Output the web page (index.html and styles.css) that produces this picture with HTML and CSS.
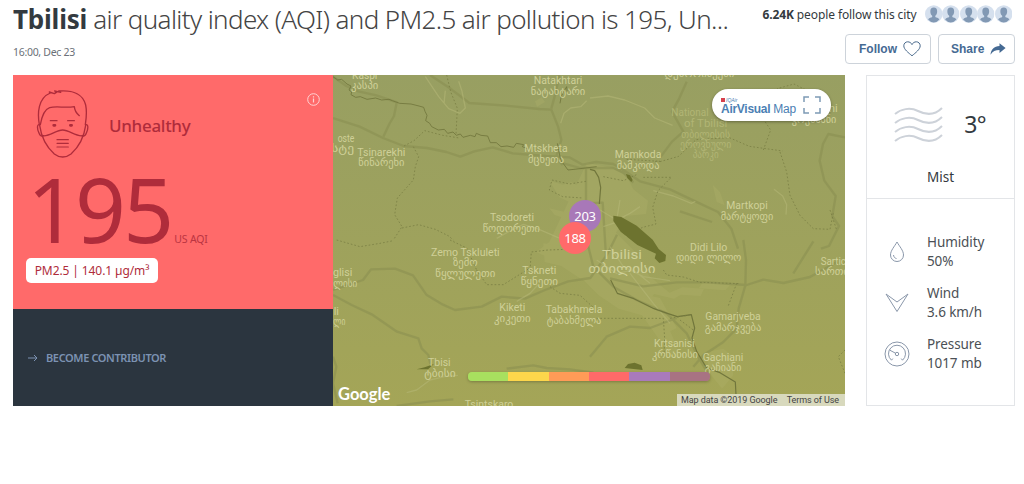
FILE: index.html
```
<!doctype html>
<html lang="en">
<head>
	<meta charset="UTF-8">
	<title>Tbilisi Air Quality Index (AQI)</title>
	<link rel="stylesheet" href="styles.css">
</head>
<body>
	<svg class="defs" width="0" height="0">
		<symbol id="user" viewBox="0 0 18 18">
			<circle cx="9" cy="9" r="9" fill="#d5e0ee"/>
			<path d="M9 2.200c-2.400 0-3.600 1.600-3.500 3.900 0 2 .6 3.800 1.900 4.700v1.400c-1 .8-3.400.8-4.200 2.400A9 9 0 0 0 9 17.800a9 9 0 0 0 5.800-3.200c-.8-1.600-3.200-1.600-4.200-2.400v-1.400c1.300-.9 1.900-2.700 1.900-4.700C12.600 3.800 11.400 2.200 9 2.200z" fill="#8299b4"/>
		</symbol>
	</svg>
	<div class="header">
		<div class="heading">
			<h1><b>Tbilisi</b> <span>air quality index (AQI) and PM2.5 air pollution is 195, Un...</span></h1>
			<p class="time">16:00, Dec 23</p>
		</div>
		<div class="social">
			<div class="followers">
				<p><b>6.24K</b> <span>people follow this city</span></p>
				<div class="avatars">
					<svg><use href="#user"/></svg>
					<svg><use href="#user"/></svg>
					<svg><use href="#user"/></svg>
					<svg><use href="#user"/></svg>
					<svg><use href="#user"/></svg>
				</div>
			</div>
			<div class="buttons">
				<a class="btn follow">Follow
					<svg width="18" height="16" viewBox="0 0 18 16" fill="none" stroke="#4a6a8c"><path d="M9 14.800C5.500 11.800.8 8.400.8 4.800.8 2.500 2.500.8 4.700.8 6.500.8 8.200 1.800 9 3.600 9.800 1.800 11.500.8 13.300.8c2.200 0 3.900 1.700 3.900 4 0 3.600-4.700 7-8.200 10z"/></svg>
				</a>
				<a class="btn share">Share
					<svg width="16" height="12" viewBox="0 0 16 12"><path d="M9.500.3 15.600 5 9.500 10V7C5.300 7 2.700 8.400.5 11.700.9 6.800 4.200 3.200 9.500 3z" fill="#456a93"/></svg>
				</a>
			</div>
		</div>
	</div>

	<div class="main">
		<div class="aqi">
			<div class="aqi-value">
				<div class="status">
					<svg class="face" width="54" height="68" viewBox="0 0 160 204" fill="none" stroke="#af2c3b" stroke-width="4" stroke-linejoin="round" stroke-linecap="round">
						<path d="M9 104C3 70 5 24 42 9l-3-3 15 5 6-4-5-4 18 4-6-4c46-4 74 12 81 42 4 20 2 40-1 59"/>
						<path d="M9 104c-8-1-6 13-2 23 3 9 7 13 14 10M149 104c8-1 6 13 2 23-3 9-7 13-14 10"/>
						<path d="M10 106c5 37 22 66 44 86 15 12 35 12 50 0 22-20 39-49 44-86"/>
						<path d="M12 104c5-28 13-46 28-51 22-6 44 2 74-3 1 13 6 20 15 27"/>
						<path d="M18 137c22 4 40-17 61-17s39 21 61 17"/>
						<path d="M42 92h20M94 92h20" stroke-width="4"/>
						<path d="M52 106h4M102 106h4" stroke-width="8"/>
						<path d="M62 149h34M62 160h34M62 171h34" stroke-width="3.500"/>
					</svg>
					<h2>Unhealthy</h2>
					<svg class="info" width="13" height="13" viewBox="0 0 13 13" fill="none" stroke="#ffd3d3"><circle cx="6.500" cy="6.500" r="5.800"/><path d="M6.500 5.500v4M6.500 3.200v1.200" stroke-width="1.200"/></svg>
				</div>
				<div class="number"><strong>195</strong><span>US AQI</span></div>
				<div class="pollutant">PM2.5 | 140.1 µg/m³</div>
			</div>
			<a class="contributor">
				<svg width="10" height="8" viewBox="0 0 10 8" fill="none" stroke="#7c92b2"><path d="M0 4h9M6 1l3 3-3 3"/></svg>
				<span>BECOME CONTRIBUTOR</span>
			</a>
		</div>

		<div class="map">
			<svg class="tiles" width="512" height="331" viewBox="9 15 1536 993">
				<defs>
					<linearGradient id="ground" x1="0" y1="0" x2="0" y2="1">
						<stop offset="0" stop-color="#989f62"/>
						<stop offset="1" stop-color="#a4a557"/>
					</linearGradient>
				</defs>
				<path d="M9 15h1536v993H9z" fill="url(#ground)"/>
				<!-- built-up areas -->
				<g class="urban">
					<path d="M658 332l40 12 26-8 34 20 6 38-46 2-30-14z"/>
					<path d="M658 415l60 14 6 22-50-16z"/>
					<path d="M770 280l70 12 50 26 20 40 44 34-6 40-60 6-30 50 60 60 40 70 60 50 40-16 64 4-10 22-60-4-20 12-60-14-20 30 50 38 30 70 20 60-30-10-36-54-50-70-70-20-60-40-60-60-74-46-54-24 40-30z"/>
					<path d="M640 520l100 14 50 60 14 40-50-6-60-40-50-12z"/>
					<path d="M1148 344l22 22 14 40-24-10zM900 664l90 20 50 90-20 10-70-60z"/>
					<path d="M1130 846l50-10 24 20 6 60-34 40-40-50zM615 94l20-12 10 14-24 14z"/>
					<path d="M1120 635l80 10-14 16-80-6z"/>
				</g>
				<!-- roads -->
				<g class="roads">
					<path d="M9 144l80 26 70 34 62 24 70 6 58 12 42 14 42-16 55-12 60 18 100 8 70 4 40 22 40-8 52 6 30 18 50 34 90 24 84 40 60 28 40 50 20 60"/>
					<path d="M160 200l18-38 14-24 8-40M9 20l40 28 36 16 54 12 64 22"/>
					<path d="M300 15l60 40 58 44 110 8 100 10 36 2 20 50 10 40-16 54 20 22"/>
					<path d="M664 116l14-52 10-50M700 280l50 14 100 0 30 14 30 30"/>
					<path d="M9 675l56 30 60 28 76 52 64 20 10 30 20 20 6 26"/>
					<path d="M9 660l90-30 24-32 72-2 54 20 40 58 50 30 36 16 80-10 60-30 70 6 60-26 70-26 66-10 50-70 30-60"/>
					<path d="M840 625l100 24 100-12 90 0 120 8 50-16 60 10 80-18 82-46M1390 610l60-96"/>
					<path d="M1240 510l8 60-2 76-20 70-6 60-40 40-60 40-30 34"/>
					<path d="M1545 202l-50-10-16 30-10 50 14 60 34 46-10 60 20 30-30 60-24 8"/>
					<path d="M1070 35l-22 50-22 40 34 60-34 30-36 48"/>
					<path d="M770 510l20 80 60 60 70 40 90 40 60 60 34 70 30 50M780 860l50-60 70-30 60 4 80-30"/>
					<path d="M768 290l0 110 50-2 10 160M1050 424l96 32"/>
					<path d="M530 896l80-10 40 8 70 4 70 10M9 860l10 30-10 50 14 60M200 1008l100-14 70-6"/>
				</g>
				<g class="lanes">
					<path d="M286 20l40 60 30 36 34 14 16-16-10-50-10-30M342 100l4-38M560 694l40-24 26-28M780 84l54-6 50 12 60 24 30 30 54 22M970 362l60 16 54 22 12-6M1332 358l26 20 12 26-2 30M230 968l30-8 40-30 44-10 40-4M692 160l10-30 20-16 30-4 18-18M900 610l70 90 50 60M500 505l40-22 40-20 40 12 70 30M840 530l40 60 60 30 80 12M800 570l60 40 50-10 50 40M810 420l50 30 40-20 30-20M820 470l60-20M870 390l-10 60 30 50"/>
				</g>
				<!-- river -->
				<g class="river">
					<path class="thin" d="M9 20l14 10 12-2 16 14 12 6-6 12 8 6-2 8 14 8 14-2 20 8 26-4 18 6 22-2 10 4 22 8 34 2 24 6 14 4 4 12 6 12-4 16 12 8 6 10 20 10 18-2 10 12 16-4 10 10 12-4 8 10 22-6 14 4 4-10 14 6 20 2 8 20 18 0 14 12 18-2 20 4 8-12 22 4-4 6 16 6"/>
					<path class="thin" d="M690 100l4-22 16-28 2 20M682 220l10 50 22 30 36-4 50-6"/>
					<path d="M780 298l14 4 12 20 6 30-4 50"/>
					<path d="M842 630l20 40 50 16 60 30 40 14 30 10 42-6 10 40-8 30 14 40 30 50 40 14 46 28 4 76"/>
				</g>
				<!-- district borders -->
				<g class="borders">
					<path d="M350 15l12 50 20 50-4 80M222 228l30-16 32-30 54 14 50 8M250 230l16 30-10 30-6 40-48 54-8 50 22 36-26 40M216 474l50-10 50 14 40 20 14 12"/>
					<path d="M768 334l-50 8-52-12-8 30 40 20 60 4M820 320l60 12 44-20M990 275l56-16 52-50 100-6 60 26 100 14M1300 240l22-60-40-60 60-64 50-14 40 20"/>
					<path d="M1350 246l20 60 10 70 30 60 40 40 50 2 10-50M890 268l100 6-20 0M940 322l84 0-40 40-16 50 10 50-40 10-20 10"/>
					<path d="M800 745h200l4 60-2 50M1020 745l60-10M1050 750l40 30M1000 600l10 15 50 6 50 16 120 4M1220 640l-26 70M600 600l4-54 50-6 60-2 40-10M440 600l30 44 50 0 80-50M660 650l30 20 60 6 40 36M20 510l70 20 60-10 40-8M360 510l50 24 30 66M1500 420l20 60M1545 840l-20 20 20 50"/>
				</g>
				<g class="lakes">
					<path d="M850 437l24 4 46 26 48 42 18 28 22 18-2 18-18 6-14-14 4-14-56-26-50-40-22-32z"/>
					<path d="M888 312l12 4 8 14-4 6-12-12zM884 894l10-12 20-4 20 8 4 14zM260 898l24-6 28-10-18 16z"/>
				</g>
				<g class="places">
					<text x="104" y="28" textLength="76" lengthAdjust="spacingAndGlyphs">Kaspi</text>
					<text class="ge" x="104" y="58" textLength="82" lengthAdjust="spacingAndGlyphs">კასპი</text>
					<text x="684" y="43" textLength="146" lengthAdjust="spacingAndGlyphs">Natakhtari</text>
					<text class="ge" x="684" y="75" textLength="164" lengthAdjust="spacingAndGlyphs">ნატახტარი</text>
					<text class="ge" x="1108" y="22" textLength="210" lengthAdjust="spacingAndGlyphs">დუბორიძეები</text>
					<text x="48" y="215" textLength="50" lengthAdjust="spacingAndGlyphs">oste</text>
					<text class="ge" x="38" y="247" textLength="68" lengthAdjust="spacingAndGlyphs">სტე</text>
					<text x="154" y="257" textLength="144" lengthAdjust="spacingAndGlyphs">Tsinarekhi</text>
					<text class="ge" x="154" y="288" textLength="138" lengthAdjust="spacingAndGlyphs">წინარეხი</text>
					<text x="648" y="247" textLength="130" lengthAdjust="spacingAndGlyphs">Mtskheta</text>
					<text class="ge" x="648" y="278" textLength="108" lengthAdjust="spacingAndGlyphs">მცხეთა</text>
					<text x="546" y="454" textLength="132" lengthAdjust="spacingAndGlyphs">Tsodoreti</text>
					<text class="ge" x="544" y="487" textLength="172" lengthAdjust="spacingAndGlyphs">წოდორეთი</text>
					<text x="924" y="265" textLength="140" lengthAdjust="spacingAndGlyphs">Mamkoda</text>
					<text class="ge" x="924" y="297" textLength="128" lengthAdjust="spacingAndGlyphs">მამკოდა</text>
					<text x="1251" y="417" textLength="124" lengthAdjust="spacingAndGlyphs">Martkopi</text>
					<text class="ge" x="1251" y="449" textLength="158" lengthAdjust="spacingAndGlyphs">მარტყოფი</text>
					<text class="ge" x="1452" y="160" textLength="134" lengthAdjust="spacingAndGlyphs">კოჭბაანი</text>
					<text x="1510" y="127" textLength="26" lengthAdjust="spacingAndGlyphs">ni</text>
					<g class="park">
						<text x="1080" y="139" textLength="112" lengthAdjust="spacingAndGlyphs">National</text>
						<text x="1127" y="172" textLength="130" lengthAdjust="spacingAndGlyphs">of Tbilisi</text>
						<text class="ge" x="1127" y="203" textLength="146" lengthAdjust="spacingAndGlyphs">თბილისის</text>
						<text class="ge" x="1127" y="234" textLength="154" lengthAdjust="spacingAndGlyphs">ეროვნული</text>
						<text class="ge" x="1127" y="263" textLength="78" lengthAdjust="spacingAndGlyphs">პარკი</text>
					</g>
					<text x="406" y="558" textLength="206" lengthAdjust="spacingAndGlyphs">Zemo Tskluleti</text>
					<text class="ge" x="406" y="589" textLength="74" lengthAdjust="spacingAndGlyphs">ზემო</text>
					<text class="ge" x="406" y="620" textLength="180" lengthAdjust="spacingAndGlyphs">წყლულეთი</text>
					<text x="38" y="619" textLength="58" lengthAdjust="spacingAndGlyphs">glisi</text>
					<text class="ge" x="46" y="650" textLength="72" lengthAdjust="spacingAndGlyphs">ლისი</text>
					<text x="19" y="734" textLength="16" lengthAdjust="spacingAndGlyphs">li</text>
					<text class="ge" x="28" y="765" textLength="36" lengthAdjust="spacingAndGlyphs">ლი</text>
					<text x="628" y="613" textLength="102" lengthAdjust="spacingAndGlyphs">Tskneti</text>
					<text class="ge" x="628" y="644" textLength="112" lengthAdjust="spacingAndGlyphs">წყნეთი</text>
					<text x="547" y="724" textLength="78" lengthAdjust="spacingAndGlyphs">Kiketi</text>
					<text class="ge" x="547" y="756" textLength="110" lengthAdjust="spacingAndGlyphs">კიკეთი</text>
					<text x="732" y="729" textLength="170" lengthAdjust="spacingAndGlyphs">Tabakhmela</text>
					<text class="ge" x="732" y="761" textLength="164" lengthAdjust="spacingAndGlyphs">ტაბახმელა</text>
					<text x="328" y="889" textLength="68" lengthAdjust="spacingAndGlyphs">Tbisi</text>
					<text class="ge" x="330" y="921" textLength="94" lengthAdjust="spacingAndGlyphs">ტბისი</text>
					<text x="477" y="1014" textLength="146" lengthAdjust="spacingAndGlyphs">Tsintskaro</text>
					<text class="city" x="876" y="567" textLength="120" lengthAdjust="spacingAndGlyphs">Tbilisi</text>
					<text class="city ge" x="876" y="609" textLength="202" lengthAdjust="spacingAndGlyphs">თბილისი</text>
					<text x="1136" y="542" textLength="112" lengthAdjust="spacingAndGlyphs">Didi Lilo</text>
					<text class="ge" x="1136" y="573" textLength="196" lengthAdjust="spacingAndGlyphs">დიდი ლილო</text>
					<text x="1510" y="584" textLength="76" lengthAdjust="spacingAndGlyphs">Sartic</text>
					<text class="ge" x="1506" y="615" textLength="102" lengthAdjust="spacingAndGlyphs">სართი</text>
					<text x="1209" y="750" textLength="166" lengthAdjust="spacingAndGlyphs">Gamarjveba</text>
					<text class="ge" x="1209" y="782" textLength="170" lengthAdjust="spacingAndGlyphs">გამარჯვება</text>
					<text x="1033" y="832" textLength="122" lengthAdjust="spacingAndGlyphs">Krtsanisi</text>
					<text class="ge" x="1035" y="863" textLength="138" lengthAdjust="spacingAndGlyphs">კრწანისი</text>
					<text x="1179" y="873" textLength="122" lengthAdjust="spacingAndGlyphs">Gachiani</text>
					<text class="ge" x="1179" y="904" textLength="110" lengthAdjust="spacingAndGlyphs">გაჩიანი</text>
				</g>
			</svg>
			<span class="marker purple">203</span>
			<span class="marker red">188</span>
			<a class="map-link">
				<span class="brand">
					<small><i></i>IQAir</small>
					<span><b>AirVisual</b> Map</span>
				</span>
				<svg width="18" height="18" viewBox="0 0 18 18" fill="none" stroke="#7d9ab5" stroke-width="1.500"><path d="M1 6V1h5M12 1h5v5M17 12v5h-5M6 17H1v-5"/></svg>
			</a>
			<div class="scale"><i></i><i></i><i></i><i></i><i></i><i></i></div>
			<span class="google">Google</span>
			<div class="terms"><span>Map data ©2019 Google</span><span>Terms of Use</span></div>
		</div>

		<div class="weather">
			<div class="now">
				<div class="temp">
					<svg width="49" height="36" viewBox="0 0 49 36" fill="none" stroke="#cdd2d9" stroke-width="2"><path d="M1 7C7 2 16 0 24 4s17 4 24-3M1 16c6-5 15-7 23-3s17 4 24-3M1 25c6-5 15-7 23-3s17 4 24-3M1 34c6-5 15-7 23-3s17 4 24-3"/></svg>
					<span>3°</span>
				</div>
				<p>Mist</p>
			</div>
			<ul class="details">
				<li>
					<svg width="26" height="26" viewBox="0 0 26 26" fill="none" stroke="#8a97aa"><path d="M13 3c-2.500 4.500-6.500 8.500-6.500 13a6.500 6.500 0 0 0 13 0C19.500 11.500 15.500 7.500 13 3z"/><path d="M9.500 16c.2 2 1.300 3.200 3 3.500"/></svg>
					<p>Humidity<br>50%</p>
				</li>
				<li>
					<svg width="26" height="26" viewBox="0 0 26 26" fill="none" stroke="#8a97aa"><path d="M2 4l11 8 11-8-11 17.500z"/></svg>
					<p>Wind<br>3.6 km/h</p>
				</li>
				<li>
					<svg width="26" height="26" viewBox="0 0 26 26" fill="none" stroke="#8a97aa"><circle cx="13" cy="13" r="12"/><path d="M7.500 19.200a8.500 8.500 0 1 1 11 0M5.500 9l6 3.200"/><circle cx="13" cy="13" r="1.700"/><path d="M7.500 19.200l1.300-1.600M18.500 19.200l-1.300-1.600"/></svg>
					<p>Pressure<br>1017 mb</p>
				</li>
			</ul>
		</div>
	</div>
</body>
</html>
```
FILE: styles.css
```
* { margin: 0; padding: 0; box-sizing: border-box; }
body { background: #fff; color: #333a40; font-family: "Noto Sans", "Open Sans", sans-serif; padding: 0 9px 0 13px; }
svg { display: block; flex: none; }
.defs { position: absolute; }
li { list-style: none; }

.header { display: flex; justify-content: space-between; height: 75px; }
.heading { width: 720px; }
h1 { font-size: 26px; line-height: 38px; height: 40px; font-weight: 300; white-space: nowrap; color: #444; letter-spacing: -.63px; }
h1 b { font-weight: 700; color: #333a40; letter-spacing: -.2px; }
.time { font-size: 10.500px; line-height: 24px; color: #6b7178; letter-spacing: -.3px; }
.followers { display: flex; justify-content: flex-end; align-items: center; gap: 8px; height: 28px; padding-right: 3px; font-size: 12px; letter-spacing: -.1px; white-space: nowrap; }
.avatars { display: flex; }
.avatars svg { width: 17.500px; height: 18px; }
.buttons { display: flex; justify-content: flex-end; gap: 7px; padding-top: 6px; }
.btn { display: flex; align-items: center; justify-content: space-between; height: 30px; border: 1px solid #cdd3da; border-radius: 4px; color: #456a93; font: bold 12px "Liberation Sans", Arial, sans-serif; }
.follow { width: 86px; padding: 0 9px 0 13px; }
.share { width: 77px; padding: 0 8px 0 12px; }

.main { display: flex; height: 331px; }
.aqi { width: 320px; display: flex; flex-direction: column; }
.aqi-value { height: 234px; background: #ff6a6a; color: #af2c3b; padding: 15px 13px; }
.status { display: flex; height: 70px; padding-left: 10px; }
h2 { flex: 1; padding: 24px 0 0 19px; font-size: 17px; line-height: 24px; font-weight: 500; letter-spacing: -.3px; }
.info { margin-top: 3px; }
.number { display: flex; align-items: baseline; height: 98px; padding-left: 1px; white-space: nowrap; }
.number strong { font-size: 89px; line-height: 98px; font-weight: 400; letter-spacing: -2.800px; }
.number span { padding-left: 3px; font-size: 10.500px; letter-spacing: -.2px; opacity: .85; }
.pollutant { width: 132px; height: 25px; background: #fff; border-radius: 5px; font-size: 12px; line-height: 25px; letter-spacing: -.1px; text-align: center; white-space: nowrap; }
.contributor { flex: 1; display: flex; align-items: center; gap: 8px; padding: 0 15px; background: #2b353f; color: #7c92b2; font-size: 11px; font-weight: 600; letter-spacing: -.38px; }

.map { position: relative; width: 512px; overflow: hidden; }
.urban { fill: #b2b36c; opacity: .3; }
.roads, .lanes, .river, .borders { fill: none; stroke-linejoin: round; }
.roads { stroke: #888d50; stroke-width: 7; opacity: .5; }
.lanes { stroke: #b8ba79; stroke-width: 4; opacity: .5; }
.river { stroke: #71763c; stroke-width: 3.500; }
.river .thin { stroke-width: 2.500; }
.borders { stroke: #7b7f45; stroke-width: 2.500; stroke-dasharray: 5 6; }
.lakes { fill: #6d732f; }
.places { fill: #cfd098; font: 30px Roboto, sans-serif; text-anchor: middle; }
.places .ge { font: 30px "DejaVu Sans", sans-serif; }
.places .city { font-size: 39px; }
.places .city.ge { font-size: 38px; }
.places .park { fill: #b1b575; }
.marker { position: absolute; width: 32px; height: 32px; border-radius: 50%; color: #fff; font-size: 13px; line-height: 32px; letter-spacing: -.3px; text-align: center; }
.purple { left: 236px; top: 125px; background: #a878b8; }
.red { left: 226px; top: 147px; background: #ff6a6a; }
.map-link { position: absolute; left: 379px; top: 14px; width: 119px; height: 32px; display: flex; justify-content: space-between; padding: 7px 10px 7px 9px; background: #fff; border-radius: 16px; box-shadow: 0 1px 3px rgba(0,0,0,.35); }
.brand { color: #4b80b3; font: 12px "Liberation Sans", Arial, sans-serif; white-space: nowrap; }
.brand small { display: flex; align-items: center; gap: 1px; height: 7px; font: italic 5px "Liberation Sans", Arial, sans-serif; }
.brand small i { width: 4px; height: 4px; background: #d6404c; }
.brand > span { display: block; line-height: 12px; letter-spacing: -.28px; }
.scale { position: absolute; left: 135px; top: 297px; width: 242px; height: 9px; display: flex; border-radius: 4px; overflow: hidden; box-shadow: 0 1px 3px rgba(0,0,0,.25); }
.scale i { flex: 1; background: #a8e05f; }
.scale i:nth-child(2) { background: #fdd64b; }
.scale i:nth-child(3) { background: #ff9b57; }
.scale i:nth-child(4) { background: #fe6a69; }
.scale i:nth-child(5) { background: #a97abc; }
.scale i:nth-child(6) { background: #a87383; }
.google { position: absolute; left: 5px; bottom: 1px; color: #fff; font: bold 16.500px/22px Lato, sans-serif; }
.terms { position: absolute; right: 0; bottom: 0; display: flex; justify-content: space-between; width: 168px; height: 12px; padding: 0 6px 0 4px; background: #d8d9bd; color: #444; font: 9px/12px Roboto, sans-serif; letter-spacing: -.08px; white-space: nowrap; }

.weather { width: 149px; margin-left: 21px; border: 1px solid #e3e5e8; }
.now { height: 123px; border-bottom: 1px solid #e3e5e8; }
.temp { display: flex; align-items: center; justify-content: space-between; height: 98px; padding: 0 28px 0 27px; font-size: 23px; letter-spacing: -.6px; }
.temp span { margin-top: -2px; }
.now p { font-size: 13.500px; line-height: 20px; margin-top: -7px; text-align: center; }
.details { display: flex; flex-direction: column; gap: 14px; padding: 34px 0 0 17px; font-size: 13.500px; line-height: 18.500px; letter-spacing: -.1px; color: #4b5055; }
.details li { display: flex; align-items: center; gap: 17px; }
```
